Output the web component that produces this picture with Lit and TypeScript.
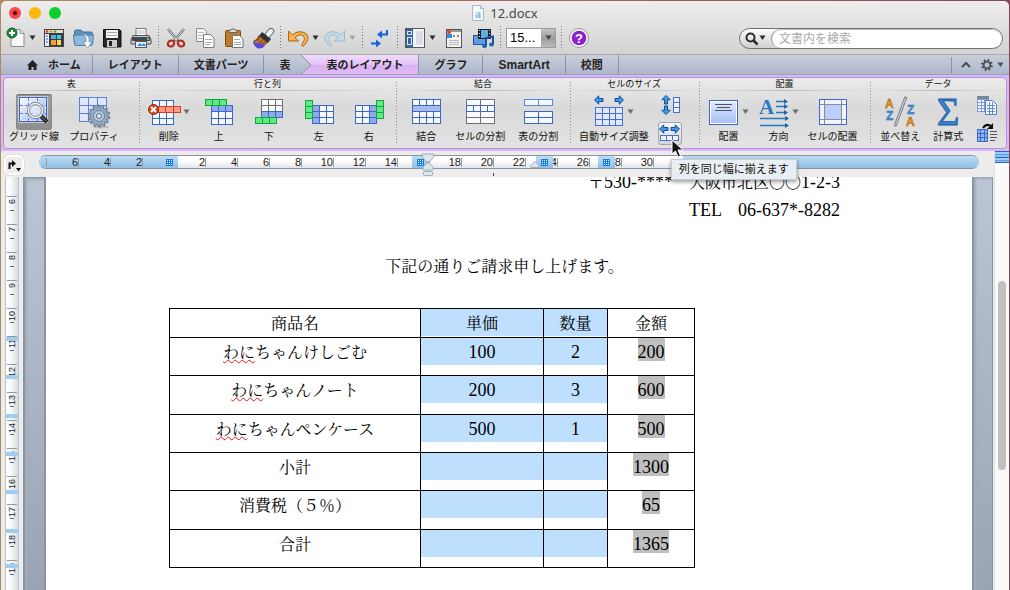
import { LitElement, html, svg, css } from "lit";
import { customElement } from "lit/decorators.js";

/* ---------- drawing helpers ---------- */

const lattice = (
  x: number, y: number, w: number, h: number, cols: number, rows: number,
  stroke = "#3f66c4", fill = "#f4f8ff",
) => {
  const v = Array.from({ length: cols - 1 }, (_, i) => x + Math.round((w * (i + 1)) / cols));
  const r = Array.from({ length: rows - 1 }, (_, i) => y + Math.round((h * (i + 1)) / rows));
  return svg`<g stroke=${stroke} fill="none">
    <rect x=${x + 0.5} y=${y + 0.5} width=${w} height=${h} fill=${fill}></rect>
    ${v.map((p) => svg`<path d=${`M${p + 0.5} ${y + 0.5}v${h}`}></path>`)}
    ${r.map((p) => svg`<path d=${`M${x + 0.5} ${p + 0.5}h${w}`}></path>`)}
  </g>`;
};

const arrow = (x: number, y: number, deg: number) => svg`
  <path transform=${`translate(${x} ${y}) rotate(${deg})`} d="M4.5 0L0.3-4.2V-1.5H-4V1.5H0.3V4.2Z"
    fill="#3d9bea" stroke="#0b4f9e" stroke-width="1"></path>`;

const cogPath = (cx: number, cy: number, r: number, teeth: number, depth: number) => {
  const pts: string[] = [];
  for (let i = 0; i < teeth; i++) {
    const a = (i / teeth) * Math.PI * 2;
    const s = (Math.PI * 2) / teeth;
    [[0, r - depth], [0.2, r], [0.55, r], [0.75, r - depth]].forEach(([k, q]) =>
      pts.push(`${(cx + Math.cos(a + s * k) * q).toFixed(2)} ${(cy + Math.sin(a + s * k) * q).toFixed(2)}`));
  }
  return `M${pts.join("L")}Z`;
};

const drop = html`<svg class="drop" width="7" height="6" viewBox="0 0 7 6"><path d="M0.5 0.5h6L3.5 5z" fill="currentColor"></path></svg>`;

const pic = (body: unknown, w = 24, h = 24) =>
  html`<svg width=${w} height=${h} viewBox=${`0 0 ${w} ${h}`} aria-hidden="true">${body}</svg>`;

/* ---------- toolbar pictures ---------- */

const tb = {
  fresh: svg`<path d="M8 3.5h9l4 4v13H8z" fill="#fafafa" stroke="#8c8c8c"></path><path d="M17 3.5v4h4" fill="#ddd" stroke="#999"></path>
    <circle cx="9" cy="7" r="5" fill="#1f8a3b" stroke="#0c5e22"></circle><path d="M9 4v6M6 7h6" stroke="#fff" stroke-width="2"></path>`,
  gallery: svg`<rect x="2.5" y="3.5" width="19" height="17" fill="#3b3b3b" stroke="#444"></rect><rect x="3" y="4" width="18" height="3" fill="#e8dcc8"></rect>
    <circle cx="5" cy="5.500" r="1.200" fill="#d33"></circle><circle cx="9" cy="5.500" r="1.200" fill="#e80"></circle><circle cx="13" cy="5.500" r="1.200" fill="#3a3"></circle>
    <rect x="3" y="8" width="4" height="12" fill="#e7eefb"></rect><path d="M4 10h2M4 13h2M4 16h2" stroke="#3468d0"></path>
    <rect x="9" y="9" width="5" height="4" fill="#4fa8f0"></rect><rect x="15" y="9" width="4" height="4" fill="#37d0e8"></rect><rect x="9" y="14" width="5" height="5" fill="#ff9b37"></rect><rect x="15" y="14" width="4" height="5" fill="#ffd84a"></rect>`,
  open: svg`<path d="M3.5 5.500q0-1.500 1.500-1.500h5l2 2h8q1.500 0 1.500 1.500V18H3.500z" fill="#5f93bd" stroke="#41719a"></path>
    <path d="M2.500 9h20l-1 9.500q-.2 1-1.200 1H4.700q-1 0-1.200-1z" fill="#8fb9da" stroke="#4c7fa9"></path>
    <path d="M11 8q5 1 4 8h-3l4.500 6 4.500-6h-3q1-8-7-8z" fill="#fff" stroke="#6e8ba3" stroke-width=".7"></path>`,
  save: svg`<path d="M3.500 3.500h16l1.500 1.500v16H3.500z" fill="#26282b" stroke="#111"></path><rect x="6" y="4" width="12" height="8" fill="#f2f2f2"></rect>
    <path d="M7 6.500h10M7 9.500h10" stroke="#aaa"></path><rect x="7" y="14" width="10" height="7" fill="#c9ccd0"></rect><rect x="9" y="15" width="3" height="5" fill="#222"></rect>`,
  print: svg`<path d="M7 2.500h10v8H7z" fill="#fff" stroke="#777"></path><path d="M8.500 5h7M8.500 7h7" stroke="#bbb"></path>
    <path d="M4 9.500h16l2 4v4.500H2v-4.500z" fill="#c9ccd0" stroke="#4e5155"></path><rect x="3" y="11" width="18" height="4" rx="1" fill="#43464a"></rect>
    <rect x="6.500" y="15.500" width="11" height="6" fill="#e9f4ff" stroke="#555"></rect><path d="M8 20l3-3 2 2 2-2 2 3z" fill="#2c8de0"></path><circle cx="19" cy="13" r="1" fill="#6f6"></circle>`,
  cut: svg`<path d="M4 3l10 12M20 3L10 15" stroke="#6d7176" stroke-width="2.600"></path><path d="M4 3l9 11M20 3l-9 11" stroke="#e4e6e8" stroke-width="1"></path>
    <ellipse cx="7" cy="17.500" rx="3.300" ry="2.800" fill="none" stroke="#b32a17" stroke-width="2.200" transform="rotate(-35 7 17.500)"></ellipse>
    <ellipse cx="17" cy="17.500" rx="3.300" ry="2.800" fill="none" stroke="#b32a17" stroke-width="2.200" transform="rotate(35 17 17.500)"></ellipse>`,
  copy: svg`<path d="M3.500 2.500h7l3 3v10h-10z" fill="#f7f7f7" stroke="#8a8a8a"></path><path d="M5 6.500h6M5 9.500h6M5 12.500h6" stroke="#bbb"></path>
    <path d="M10.500 8.500h7l3.500 3.500v9.500H10.500z" fill="#fff" stroke="#7d7d7d"></path><path d="M12 13.500h7M12 16.500h7M12 18.500h5" stroke="#aaa"></path>`,
  paste: svg`<rect x="3.500" y="4.500" width="15" height="16" rx="1" fill="#c07a2c" stroke="#7f4a12"></rect><path d="M7 6.500V4h2q2-3 4 0h2v2.500z" fill="#dadada" stroke="#666"></path>
    <path d="M10.500 9.500h7l3.500 3.500v8.500H10.500z" fill="#fff" stroke="#777"></path><path d="M12 13.500h6M12 16.500h7M12 18.500h7" stroke="#aaa"></path>`,
  brush: svg`<path d="M14 8l4-5q2-1.500 4 0t0 4l-5 6z" fill="#eceef1" stroke="#55585c"></path><path d="M11 6l9 7-3 4-9-7z" fill="#2e3236"></path>
    <path d="M8 9.500l8.500 7q-4 4-8 4-4-2-6-5 4-1.500 5.500-6z" fill="#b97030" stroke="#6b3a10"></path><path d="M6 15l3-4M9 17l3-4M12 18l2-3" stroke="#7a4516"></path><path d="M2 16q4 2 8 1l4 3q-3 3-7 2.500-4-2-5-6.500z" fill="#5a46e0"></path>`,
  undo: svg`<path d="M2.500 5v10h10l-3.500-3.300q4-4.500 8-2 3.500 3-1.500 9.300l1.500 1.500q8-7.500 3.500-12.500Q14 3 6.300 8.800z" fill="#f7b44d" stroke="#a8640f"></path>`,
  redo: svg`<path d="M21.500 5v10h-10l3.500-3.300q-4-4.500-8-2-3.500 3 1.500 9.300L7 20.500Q-1 13 3.500 8 10 3 17.700 8.800z" fill="#c6dbe8" stroke="#9dbacd"></path>`,
  marks: svg`<path d="M19 4v4.500h-5M3 17.500h6" fill="none" stroke="#1463e0" stroke-width="2"></path><path d="M14 4.500v8l-5-4zM8 13.500v8l5-4z" fill="#1463e0"></path>`,
  sidebar: svg`<rect x="2.500" y="2.500" width="19" height="19" fill="#f3f5f8" stroke="#54575c"></rect><rect x="3" y="3" width="7" height="18" fill="#3d639f"></rect>
    <rect x="4.500" y="5.500" width="4" height="3" fill="none" stroke="#dbe8fb"></rect><rect x="4.500" y="11.500" width="4" height="7" fill="none" stroke="#dbe8fb"></rect><rect x="13" y="5" width="7" height="14" fill="#d9dde3"></rect>`,
  toolbox: svg`<rect x="4.500" y="3.500" width="15" height="18" fill="#f4f4f0" stroke="#555"></rect><rect x="5" y="4" width="14" height="2" fill="#999"></rect><circle cx="7" cy="6" r="2" fill="#e2431e"></circle>
    <rect x="5" y="8" width="5" height="4" fill="#3688dd"></rect><path d="M11 10h2M15 10h2" stroke="#888" stroke-width="2"></path><path d="M7 14.500h10M7 16.500h10M7 18.500h10" stroke="#bbb"></path>`,
  media: svg`<rect x="2.500" y="9.500" width="12" height="9" fill="#5d9de6" stroke="#23548f"></rect><rect x="7" y="3" width="13" height="10" fill="#1d1f22"></rect><rect x="10" y="4" width="7" height="8" fill="#5faee8"></rect>
    <path d="M8.500 4v9M18.500 4v9" stroke="#eee" stroke-dasharray="1 2"></path><path d="M15 20v-8l7-1.500V18" fill="none" stroke="#17549c" stroke-width="2"></path><ellipse cx="13.500" cy="20" rx="2.500" ry="2" fill="#1e62b0"></ellipse><ellipse cx="20.500" cy="18.500" rx="2.500" ry="2" fill="#1e62b0"></ellipse>`,
  help: svg`<circle cx="12" cy="12" r="9.500" fill="#f7f7f7" stroke="#9a9a9a"></circle><circle cx="12" cy="12" r="7.300" fill="#8d1fd0"></circle>
    <text x="12" y="16.500" text-anchor="middle" font-family="Liberation Sans" font-weight="700" font-size="13" fill="#fff">?</text>`,
};

/* ---------- ribbon pictures ---------- */

const GREEN = "#12a637", MINT = "#5eea86", TINT = "#8fabee", GREY = "#6e7178";
const rb = {
  gridlines: svg`<defs><linearGradient id="gl" x1="0" y1="0" x2="1" y2="1"><stop offset="0" stop-color="#fff"></stop><stop offset="1" stop-color="#8fb0f0"></stop></linearGradient></defs>
    <rect x="3.500" y="3.500" width="27" height="24" fill="url(#gl)" stroke="#fff" stroke-width="2"></rect><rect x="3.500" y="3.500" width="27" height="24" fill="none" stroke="#3c62c0"></rect>
    <path d="M12.500 4v23M21.500 4v23M4 11.500h26M4 19.500h26" stroke="#5b7fd6" stroke-dasharray="3 2" fill="none"></path>
    <path d="M25 22l6 6" stroke="#222" stroke-width="4"></path><path d="M25 22l5 5" stroke="#888" stroke-width="1"></path>
    <circle cx="19.500" cy="16.500" r="7" fill="#dfeafc" fill-opacity=".8" stroke="#777" stroke-width="3"></circle><circle cx="19.500" cy="16.500" r="7" fill="none" stroke="#eee" stroke-width="1.500"></circle>`,
  properties: svg`${lattice(3, 3, 27, 24, 3, 3, "#5d82dc", "#dfe8ff")}<ellipse cx="25" cy="33" rx="8" ry="1.500" fill="#bbb"></ellipse>
    <path d=${cogPath(23, 22, 11, 14, 2.5)} fill="#93abc6" stroke="#5b7088" stroke-width="1"></path><circle cx="23" cy="22" r="5.500" fill="#b9cbe0" stroke="#6d8299"></circle><circle cx="23" cy="22" r="2.500" fill="#e2e4e8" stroke="#5d7187"></circle>`,
  remove: svg`${lattice(4, 6, 21, 24, 3, 4)}${lattice(10, 12, 22, 6, 3, 1, "#dc3b25", "#ff9c88")}
    <circle cx="5.500" cy="15.500" r="5" fill="#d4451c" stroke="#8f2606"></circle><path d="M3 13l5 5M8 13l-5 5" stroke="#fff" stroke-width="2"></path>`,
  above: svg`${lattice(8, 11, 21, 19, 3, 3)}${lattice(8, 11, 21, 6, 3, 1, "#3f66c4", TINT)}${lattice(2, 5, 21, 6, 3, 1, GREEN, MINT)}`,
  below: svg`${lattice(8, 5, 21, 12, 3, 2, GREY, "#fafafa")}${lattice(8, 17, 21, 6, 3, 1, "#3f66c4", TINT)}${lattice(2, 23, 21, 6, 3, 1, GREEN, MINT)}`,
  left: svg`${lattice(9, 11, 21, 18, 3, 3)}${lattice(9, 11, 7, 18, 1, 3, "#3f66c4", TINT)}${lattice(2, 6, 7, 18, 1, 3, GREEN, MINT)}`,
  right: svg`${lattice(2, 11, 21, 18, 3, 3)}${lattice(16, 11, 7, 18, 1, 3, "#3f66c4", TINT)}${lattice(23, 6, 7, 18, 1, 3, GREEN, MINT)}`,
  merge: svg`${lattice(2, 5, 28, 24, 4, 4)}${lattice(2, 11, 28, 6, 1, 1, "#3f66c4", "#a5bcf3")}`,
  splitCells: svg`${lattice(2, 5, 28, 24, 2, 4, GREY, "#fafafa")}${lattice(2, 11, 28, 6, 4, 1)}`,
  splitTable: svg`${lattice(2, 5, 28, 6, 2, 1, "#5b86dd")}${lattice(2, 17, 28, 12, 2, 2, "#3f66c4")}`,
  autofit: svg`${arrow(6, 6, 180)}${arrow(26, 6, 0)}${lattice(2, 13, 27, 18, 4, 3, "#4a70cf", "#dfe8ff")}`,
  rowsEven: svg`${arrow(7, 5, -90)}${arrow(7, 15, 90)}${lattice(14, 2, 6, 15, 1, 3, "#4a70cf", "#eef3ff")}`,
  colsEven: svg`${arrow(5, 6, 180)}${arrow(16, 6, 0)}${lattice(1, 12, 18, 5, 3, 1, "#4a70cf", "#eef3ff")}`,
  align: svg`<defs><linearGradient id="al" x1="0" y1="0" x2="0" y2="1"><stop offset="0" stop-color="#e4ecff"></stop><stop offset="1" stop-color="#a3bbf6"></stop></linearGradient></defs>
    <rect x="1.500" y="6.500" width="28" height="24" fill="url(#al)" stroke="#3f66c4"></rect><rect x="2.500" y="7.500" width="26" height="22" fill="none" stroke="#fff"></rect><path d="M7 10.500h17M9 13.500h13M7 16.500h17" stroke="#50555e"></path>`,
  direction: svg`<text x="0" y="20" font-family="Liberation Serif" font-weight="700" font-size="21" fill="#2c78c4">A</text>
    <g stroke="#2277c4" stroke-width="1.500"><path d="M17 7.500h9M17 12.500h9M17 18.500h9M1 24.500h26M1 31.500h26" fill="none"></path></g>
    <path d="M25 5v5l4-2.500zM25 10v5l4-2.500zM25 16v5l4-2.500zM26 22v5l4-2.500zM26 29v5l4-2.500z" fill="#1b62ad"></path>`,
  cellAlign: svg`<rect x="2.500" y="5.500" width="27" height="25" fill="#f0f4ff" stroke="#4168c6"></rect><rect x="8" y="11" width="16" height="14" fill="#bccdfa"></rect>
    <path d="M7.500 6v24M24.500 6v24M3 10.500h26M3 25.500h26" stroke="#858b98"></path>`,
  sort: svg`<g font-family="Liberation Sans" font-weight="700" font-size="12"><text x="3" y="14" fill="#e08c14" stroke="#a85f06" stroke-width=".4">A</text><text x="4" y="26" fill="#4a9ade" stroke="#1f62a6" stroke-width=".4">Z</text>
    <text x="25" y="20" fill="#4a9ade" stroke="#1f62a6" stroke-width=".4">Z</text><text x="24" y="32" fill="#e08c14" stroke="#a85f06" stroke-width=".4">A</text></g>
    <path d="M23.500 4L13.500 31" stroke="#7d8188" stroke-width="3" stroke-linecap="round"></path><path d="M23.500 4L13.500 31" stroke="#d6d9de" stroke-width="1"></path>`,
  sigma: svg`<text x="16" y="31" text-anchor="middle" font-family="Liberation Serif" font-size="39" fill="#3c83cf" stroke="#1d5aa0" stroke-width=".8">Σ</text>`,
  tables: svg`${lattice(0, 1, 11, 15, 3, 5, "#7f9bd8", "#f4f8ff")}<rect x="0" y="1" width="12" height="3" fill="#7a8597"></rect>
    <path d="M8.500 5.500h7l4 4v10h-11z" fill="#f4f8ff" stroke="#5a7cc8"></path><path d="M10 10.500h8M10 13.500h8M10 16.500h8M12.500 7v12M15.500 7v12" stroke="#5c92dc"></path>`,
  convert: svg`${lattice(0, 6, 10, 12, 3, 3, "#3f66c4", "#8fb6f5")}<path d="M13 8.500h7M13 11.500h7M13 14.500h7M13 17.500h5" stroke="#555"></path>
    <path d="M6 5q3-5 8-2" fill="none" stroke="#111" stroke-width="2"></path><path d="M16 0v6h-6z" fill="#111"></path>`,
};

const base = css`
  :host { display: block; }
  * { box-sizing: border-box; }
  svg { display: block; flex: none; overflow: visible; }
  button { font: inherit; color: inherit; border: 0; background: none; padding: 0; margin: 0; }
`;

/* ---------- title bar and toolbar ---------- */

@customElement("title-tools")
class TitleTools extends LitElement {
  static styles = [base, css`
    :host { background: linear-gradient(#ededed, #d3d3d3); border-bottom: 1px solid #a9a9a9; border-radius: 5px 5px 0 0; }
    .title { display: grid; grid-template-columns: 1fr auto 1fr; align-items: center; height: 24px; padding: 0 8px; }
    .lights { display: flex; gap: 8px; }
    .light { width: 12px; height: 12px; border-radius: 6px; }
    .close { background: radial-gradient(circle, #4d0000 0 1px, #fc4848 3px); }
    .min { background: #fdb90b; }
    .max { background: #0bcd2c; }
    .name { display: flex; align-items: center; gap: 6px; font: 400 13px/20px "Noto Sans", sans-serif; color: #4a4a4a; margin: 0; }
    .tools { display: flex; align-items: center; gap: 5px; padding: 1px 6px 4px 2px; }
    .btn { width: 24px; height: 24px; flex: none; }
    .split, .pair { display: flex; align-items: center; flex: none; }
    .pair { gap: 3px; }
    .more { width: 10px; height: 24px; display: flex; align-items: center; justify-content: center; color: #2c2c2c; }
    .dim { color: #a3a3a3; }
    .sep { width: 1px; height: 24px; flex: none; background: repeating-linear-gradient(#777 0 1px, transparent 1px 3px); }
    .zoom { width: 50px; height: 20px; flex: none; border: 1px solid #9b9b9b; background: #fff; display: flex; }
    .zoom select { flex: 1; min-width: 0; appearance: none; border: 0; padding: 0 0 0 3px; background: none; font: 13px/18px "Liberation Sans", sans-serif; color: #000; outline: 0; }
    .knob { width: 14px; display: grid; place-items: center; background: linear-gradient(#c4c4c4, #9c9c9c 50%, #b9b9b9); color: #444; }
    .search { margin-left: auto; width: 264px; height: 21px; display: flex; border: 1px solid #6f6f6f; border-radius: 11px; background: linear-gradient(#fdfdfd, #cfcfcf); overflow: hidden; }
    .scope { width: 31px; display: flex; align-items: center; gap: 1px; padding-left: 5px; color: #2b2b2b; }
    .search input { flex: 1; min-width: 0; border: 0; border-left: 1px solid #999; border-radius: 10px; outline: 0; padding: 2px 7px 0; background: #fff; box-shadow: inset 0 1px 1px #bbb; font: 12px/17px "Liberation Sans", "Noto Sans CJK JP", sans-serif; }
    .search input::placeholder { color: #a9a9a9; opacity: 1; }
  `];

  private btn(label: string, body: unknown) {
    return html`<button class="btn" aria-label=${label}>${pic(body)}</button>`;
  }
  private split(label: string, body: unknown, dim = false) {
    return html`<span class="split">${this.btn(label, body)}<button class=${dim ? "more dim" : "more"} aria-label=${label + "のメニュー"}>${drop}</button></span>`;
  }

  render() {
    const sep = html`<span class="sep"></span>`;
    return html`
      <div class="title">
        <div class="lights">
          <button class="light close" aria-label="閉じる"></button><button class="light min" aria-label="しまう"></button><button class="light max" aria-label="拡大"></button>
        </div>
        <h1 class="name">
          ${pic(svg`<path d="M.5.5h8l3 3v12H.5z" fill="#f3f8fc" stroke="#a9b9c6"></path><path d="M8.500.5v3h3" fill="#dde6ed" stroke="#a9b9c6"></path><text x="6" y="13" text-anchor="middle" font-family="Liberation Serif" font-size="12" font-weight="700" fill="#7dbbe2">a</text>`, 12, 16)}
          12.docx
        </h1>
        <span></span>
      </div>
      <div class="tools">
        ${this.split("新規", tb.fresh)} ${this.btn("ギャラリー", tb.gallery)} ${this.btn("開く", tb.open)} ${this.btn("保存", tb.save)} ${this.btn("プリント", tb.print)}
        ${sep}
        ${this.btn("カット", tb.cut)} ${this.btn("コピー", tb.copy)} ${this.btn("ペースト", tb.paste)} ${this.btn("書式", tb.brush)}
        ${sep}
        <span class="pair">${this.split("取り消す", tb.undo)} ${this.split("やり直す", tb.redo, true)}</span>
        ${sep} ${this.btn("編集記号", tb.marks)} ${sep}
        ${this.split("サイドバー", tb.sidebar)} ${this.btn("ツールボックス", tb.toolbox)} ${this.btn("メディア", tb.media)}
        ${sep}
        <span class="zoom"><select aria-label="倍率"><option>15...</option></select><span class="knob">${drop}</span></span>
        ${sep} ${this.btn("ヘルプ", tb.help)}
        <div class="search">
          <button class="scope" aria-label="検索範囲">
            ${pic(svg`<circle cx="5.500" cy="5.500" r="4" fill="none" stroke="currentColor" stroke-width="2"></circle><path d="M8.500 8.500l4 4" stroke="currentColor" stroke-width="2.500"></path>`, 13, 13)} ${drop}
          </button>
          <input type="search" aria-label="文書内を検索" placeholder="文書内を検索" />
        </div>
      </div>`;
  }
}

/* ---------- tab strip ---------- */

@customElement("tab-strip")
class TabStrip extends LitElement {
  static styles = [base, css`
    :host { font: 700 11px/18px "Liberation Sans", "Noto Sans CJK JP", sans-serif; color: #222; }
    .strip { display: flex; height: 20px; background: linear-gradient(#c9cfda, #adb7ca); border-bottom: 1px solid #97a3bd; }
    .tab { display: flex; align-items: center; padding: 0 15px; border-right: 1px solid #8b94a5; white-space: nowrap; }
    .home { gap: 10px; padding: 0 11px 0 26px; }
    .before { border-right: 0; padding-right: 10px; }
    .active { padding: 0; background: linear-gradient(#f0dcfb, #e4c4f6 50%, #d9b0f1 51%, #dfbaf5); }
    .active span { padding: 0 15px 0 14px; }
    .latin { font-size: 12px; }
    .end { margin-left: auto; display: flex; align-items: center; color: #4a4d52; }
    .end button { display: flex; align-items: center; gap: 4px; height: 16px; }
    .fold { width: 28px; justify-content: center; border-left: 1px solid #8b94a5; }
    .gear { padding: 0 5px 0 2px; }
  `];
  render() {
    return html`<nav class="strip">
      <button class="tab home">${pic(svg`<path d="M5.500 0L0 5.500h1.500V10H4.500V7h2v3h3V5.500H11z" fill="#222"></path>`, 11, 10)}ホーム</button>
      <button class="tab">レイアウト</button>
      <button class="tab">文書パーツ</button>
      <button class="tab before">表</button>
      <button class="tab active">
        ${pic(svg`<defs><linearGradient id="tg" x1="0" y1="0" x2="0" y2="1"><stop offset="0" stop-color="#c9cfda"></stop><stop offset="1" stop-color="#adb7ca"></stop></linearGradient></defs>
          <path d="M0 0h1l10 10-10 9H0z" fill="url(#tg)"></path><path d="M1 0l10 10-10 9" fill="none" stroke="#8f8aa5"></path>`, 12, 19)}
        <span>表のレイアウト</span>
      </button>
      <button class="tab">グラフ</button>
      <button class="tab latin">SmartArt</button>
      <button class="tab">校閲</button>
      <div class="end">
        <button class="fold" aria-label="リボンを閉じる">${pic(svg`<path d="M1 7l4-4 4 4" fill="none" stroke="#4a4d52" stroke-width="2"></path>`, 10, 9)}</button>
        <button class="gear" aria-label="リボンの設定">${pic(svg`<path fill-rule="evenodd" d=${cogPath(6, 6, 6, 8, 2) + "M6 3.500a2.500 2.500 0 1 0 .01 0z"} fill="#4a4d52"></path>`, 12, 12)}${drop}</button>
      </div>
    </nav>`;
  }
}

/* ---------- ribbon ---------- */

type Item = { label: string; art: unknown; size: string; w?: number; menu?: boolean; on?: boolean };
type Group = { title: string; items: Item[]; extra?: unknown };

@customElement("table-ribbon")
class TableRibbon extends LitElement {
  static styles = [base, css`
    :host { background: #d9b8f6; padding: 2px; font: 10px/14px "Liberation Sans", "Noto Sans CJK JP", sans-serif; color: #111; }
    .panel { display: grid; grid-template-columns: 135fr 258fr 174fr 129fr 172fr 136fr; height: 72px; border: 1px solid #b88fe0; border-radius: 4px; background: linear-gradient(#ebebeb, #d9d9d9 45%, #e3e3e3); }
    .group { min-width: 0; position: relative; }
    .group + .group { background: repeating-linear-gradient(#8c8c8c 0 1px, transparent 1px 3px) 0 4px / 1px 62px no-repeat; }
    h2 { margin: 0; font-size: 9px; line-height: 13px; font-weight: 400; text-align: center; height: 13px; border-bottom: 1px solid; border-image: linear-gradient(90deg, transparent, #bbb, transparent) 1; }
    .row { display: flex; padding: 3px 0 0 5px; }
    .group:first-child .row { padding-left: 0; }
    .item { display: flex; flex-direction: column; align-items: center; white-space: nowrap; flex: none; }
    .art { display: flex; align-items: center; gap: 2px; height: 36px; color: #6b6b6b; }
    .on { background: linear-gradient(#a2a2a2, #8e8e8e); border-radius: 3px; box-shadow: inset 0 1px 2px #666; }
    .s46 { width: 46px; } .s50 { width: 50px; } .s58 { width: 58px; } .s60 { width: 60px; } .s78 { width: 78px; }
    .minis { display: flex; flex-direction: column; gap: 5px; margin-left: 5px; position: relative; }
    .mini { width: 24px; height: 23px; border: 1px solid transparent; border-radius: 3px; }
    .hover { border-color: #a4a4a4; background: linear-gradient(#f6f6f6, #d6d6d6); }
    .tip { position: absolute; z-index: 5; left: 13px; top: 65px; padding: 1px 7px 2px; font-size: 11px; line-height: 16px; white-space: nowrap; background: #e8eef2; border: 1px solid #c6ccd0; box-shadow: 0 2px 4px rgba(0, 0, 0, .4); }
    .pointer { position: absolute; z-index: 6; left: 13px; top: 45px; }
  `];

  private groups: Group[] = [
    { title: "表", items: [
      { label: "グリッド線", art: rb.gridlines, size: "s60", w: 36, on: true },
      { label: "プロパティ", art: rb.properties, size: "s60", w: 36 }] },
    { title: "行と列", items: [
      { label: "削除", art: rb.remove, size: "s50", w: 33, menu: true },
      { label: "上", art: rb.above, size: "s50" }, { label: "下", art: rb.below, size: "s50" },
      { label: "左", art: rb.left, size: "s50" }, { label: "右", art: rb.right, size: "s50" }] },
    { title: "結合", items: [
      { label: "結合", art: rb.merge, size: "s50" }, { label: "セルの分割", art: rb.splitCells, size: "s58" }, { label: "表の分割", art: rb.splitTable, size: "s58" }] },
    { title: "セルのサイズ", items: [{ label: "自動サイズ調整", art: rb.autofit, size: "s78", menu: true }],
      extra: html`<div class="minis">
        <button class="mini" aria-label="行の高さを揃える">${pic(rb.rowsEven, 22, 21)}</button>
        <button class="mini hover" aria-labelledby="tip">${pic(rb.colsEven, 22, 21)}</button>
        <span class="tip" id="tip" role="tooltip">列を同じ幅に揃えます</span>
        <svg class="pointer" width="13" height="19" viewBox="0 0 13 19"><path d="M1 1v14l3.500-3 2.500 6 2.500-1-2.500-6H12z" fill="#111" stroke="#fff"></path></svg>
      </div>` },
    { title: "配置", items: [
      { label: "配置", art: rb.align, size: "s50", menu: true }, { label: "方向", art: rb.direction, size: "s50", menu: true, w: 31 }, { label: "セルの配置", art: rb.cellAlign, size: "s58" }] },
    { title: "データ", items: [
      { label: "並べ替え", art: rb.sort, size: "s50", w: 37 }, { label: "計算式", art: rb.sigma, size: "s46" }],
      extra: html`<div class="minis">
        <button class="mini" aria-label="見出し行の繰り返し">${pic(rb.tables, 22, 21)}</button>
        <button class="mini" aria-label="表の変換">${pic(rb.convert, 22, 21)}</button></div>` },
  ];

  render() {
    return html`<div class="panel">${this.groups.map((g) => html`
      <section class="group"><h2>${g.title}</h2><div class="row">
        ${g.items.map((i) => html`<button class="item ${i.size}">
          <span class=${i.on ? "art on" : "art"}>${pic(i.art, i.w ?? 32, 36)}${i.menu ? drop : ""}</span>${i.label}</button>`)}
        ${g.extra ?? ""}
      </div></section>`)}</div>`;
  }
}

/* ---------- document with its rulers ---------- */

@customElement("doc-view")
class DocView extends LitElement {
  static styles = [base, css`
    :host { flex: 1; min-height: 0; display: grid; grid-template-columns: minmax(0, 1fr) 15px; background: #ececec; font: 11px/14px "Liberation Sans", sans-serif; color: #222; }
    .main { display: flex; flex-direction: column; min-height: 0; }
    .top { display: flex; height: 26px; padding: 4px 15px 0 3px; gap: 15px; flex: none; }
    .stop { width: 20px; height: 20px; border: 2px solid #fff; border-radius: 5px; box-shadow: 0 0 1px #888; background: #ececec; display: grid; place-items: center; }
    .ruler { flex: 1; position: relative; display: flex; height: 14px; border: 1px solid #9fa6ab; border-color: #8d959b #a9c3d8; border-radius: 7px; background: linear-gradient(#fff, #fff 40%, #dfe5e8); overflow: hidden; }
    .lead, .tail { background: linear-gradient(#bcdcf4, #8fc0e6); }
    .lead { width: 137px; display: flex; flex: none; }
    .tail { flex: 1; }
    .cell { width: 32px; flex: none; text-align: right; line-height: 13px; padding-right: 1px; background: linear-gradient(#9a9a9a, #9a9a9a) 100% 2px / 1px 9px no-repeat; }
    .first { width: 7px; }
    .body { width: 509px; margin-left: -3px; display: flex; flex: none; overflow: hidden; }
    .mark { position: absolute; top: 0; width: 17px; height: 12px; display: grid; place-items: center; background: linear-gradient(#bcdcf4, #8fc0e6); }
    .dots { width: 7px; height: 7px; background: repeating-linear-gradient(90deg, #1b7fe0 0 1px, transparent 1px 2px), repeating-linear-gradient(#1b7fe0 0 1px, #dcefff 1px 2px); }
    .rulerbox { flex: 1; display: flex; position: relative; height: 22px; }
    .indent { position: absolute; left: 382px; top: -2px; }
    .work { flex: 1; min-height: 0; display: flex; overflow: hidden; }
    .side { width: 14px; margin: 0 4px; flex: none; position: relative; overflow: hidden; border: 1px solid #b9c3ca; border-width: 0 1px; background: linear-gradient(90deg, #fff, #f7f9fa 40%, #d5dce0); }
    .unit { height: 28px; background: linear-gradient(#999, #999) 1px 0 / 10px 1px no-repeat, linear-gradient(#666, #666) 4px 14px / 4px 1px no-repeat; }
    .unit span { display: block; writing-mode: vertical-rl; transform: rotate(180deg); font-size: 9px; line-height: 12px; width: 12px; height: 16px; text-align: right; padding-bottom: 3px; }
    .lip { height: 19px; }
    .band { position: absolute; left: 0; width: 12px; height: 4px; background: #a3cdee; }
    .gutter { width: 23px; flex: none; background: linear-gradient(#bcc5d3, #9aa4b3); border: 1px solid #8b94a3; border-width: 1px 2px 0 2px; box-shadow: inset 2px 2px 2px #a3acbb; }
    .right { width: 21px; margin-right: 1px; border-width: 0 1px 0 2px; }
    .page { flex: 1; min-width: 0; background: #fff; overflow: hidden; color: #000; font: 400 16px/28px "Noto Serif CJK JP", "Noto Sans CJK JP", sans-serif; }
    .text { margin: -9px 132px 0 123px; }
    p { margin: 0; height: 28px; }
    .r { text-align: right; }
    .c { text-align: center; }
    .n { font-family: "Liberation Serif", serif; font-size: 18px; line-height: 20px; }
    table { border-collapse: collapse; table-layout: fixed; width: 526px; }
    .w1 { width: 251px; } .w2 { width: 123px; } .w3 { width: 64px; } .w4 { width: 87px; }
    th, td { border: 1px solid #000; padding: 0; text-align: center; vertical-align: top; font-weight: inherit; line-height: 27px; }
    thead tr { height: 29px; }
    tbody tr { height: 38px; }
    tbody tr:nth-child(3n + 2) { height: 39px; }
    .box { height: 27px; }
    .sel { background: #bfdfff; }
    .field { display: inline-block; height: 23px; line-height: 28px; vertical-align: top; background: #bfbfbf; }
    u { text-decoration: underline wavy #f01018 1px; text-underline-offset: 1px; text-decoration-skip-ink: none; }
    .scroll { background: #fafafa; display: flex; flex-direction: column; border-left: 1px solid #e2e2e2; }
    .pane { height: 12px; flex: none; background: repeating-linear-gradient(#2566b8 0 1px, #9fcbf6 1px 3px, #5a9be0 3px 4px, #8fc2f4 4px 6px); border-bottom: 1px solid #2566b8; }
    .thumb { width: 8px; height: 189px; border-radius: 4px; background: #c1c1c1; margin: 118px 0 0 3px; }
  `];

  private rows = [
    ["けしごむ", "100", "2", "200"], ["ノート", "200", "3", "600"], ["ペンケース", "500", "1", "500"],
    ["小計", "", "", "1300"], ["消費税（５％）", "", "", "65"], ["合計", "", "", "1365"],
  ];

  render() {
    const evens = Array.from({ length: 15 }, (_, i) => (i + 1) * 2);
    const n = (t: string) => html`<span class="n">${t}</span>`;
    return html`
      <div class="main">
        <div class="top">
          <button class="stop" aria-label="タブの種類">${pic(svg`<path d="M2.500 11V5.500H6" fill="none" stroke="#111" stroke-width="2"></path><path d="M5 2v7l4-3.500z" fill="#111"></path><path d="M9 10h5l-2.500 3.500z" fill="#111"></path>`, 14, 14)}</button>
          <div class="rulerbox">
            <div class="ruler">
              <div class="lead"><span class="cell first"></span><span class="cell">6</span><span class="cell">4</span><span class="cell">2</span></div>
              <div class="body">${evens.map((e) => html`<span class="cell">${e}</span>`)}</div>
              <div class="tail"></div>
              ${[121, 372, 496, 558].map((x) => html`<span class="mark" style="left:${x}px"><i class="dots"></i></span>`)}
            </div>
            <svg class="indent" width="126" height="24" viewBox="0 0 126 24"><g fill="#dfe6ea" stroke="#9fb0bb"><path d="M1.500 1h11v3L9 8.500H5L1.500 4z"></path><path d="M7 9.500l5 4.500v3H2v-3z"></path><rect x="2.500" y="18.500" width="9" height="4" rx="1"></rect>
              <path d="M114 8.500l4 4v2h-8v-2z"></path></g><path d="M72.500 20v3" stroke="#445"></path></svg>
          </div>
        </div>
        <div class="work">
          <div class="side">
            <div class="lip"></div>
            ${Array.from({ length: 14 }, (_, i) => html`<div class="unit"><span>${i + 6}</span></div>`)}
            ${[160, 198, 237, 275, 313, 352, 387].map((y) => html`<i class="band" style="top:${y}px"></i>`)}
          </div>
          <div class="gutter"></div>
          <div class="page"><div class="text">
            <p class="r">〒${n("530-****")}　大阪市北区〇〇${n("1-2-3")}</p>
            <p class="r">${n("TEL")}　${n("06-637*-8282")}</p>
            <p></p>
            <p class="c">下記の通りご請求申し上げます。</p>
            <p></p>
            <table>
              <colgroup><col class="w1" /><col class="w2" /><col class="w3" /><col class="w4" /></colgroup>
              <thead><tr><th>商品名</th><th><div class="box sel">単価</div></th><th><div class="box sel">数量</div></th><th>金額</th></tr></thead>
              <tbody>${this.rows.map(([a, b, c, d], i) => html`<tr>
                <td>${i < 3 ? html`<u>わに</u>ちゃん` : ""}${a}</td>
                <td><div class="box sel">${n(b)}</div></td><td><div class="box sel">${n(c)}</div></td>
                <td><span class="field n">${d}</span></td></tr>`)}</tbody>
            </table>
          </div></div>
          <div class="gutter right"></div>
        </div>
      </div>
      <div class="scroll"><div class="pane"></div><div class="thumb"></div></div>`;
  }
}

@customElement("app-root")
class AppRoot extends LitElement {
  static styles = css`
    :host { display: flex; flex-direction: column; box-sizing: border-box; height: 100vh; padding: 1px 1px 0; overflow: hidden;
      background: linear-gradient(90deg, #b08a5c, #b0655c 50%, #8a4658); }
    table-ribbon { position: relative; z-index: 2; }
  `;
  render() {
    return html`<title-tools></title-tools><tab-strip></tab-strip><table-ribbon></table-ribbon><doc-view></doc-view>`;
  }
}
